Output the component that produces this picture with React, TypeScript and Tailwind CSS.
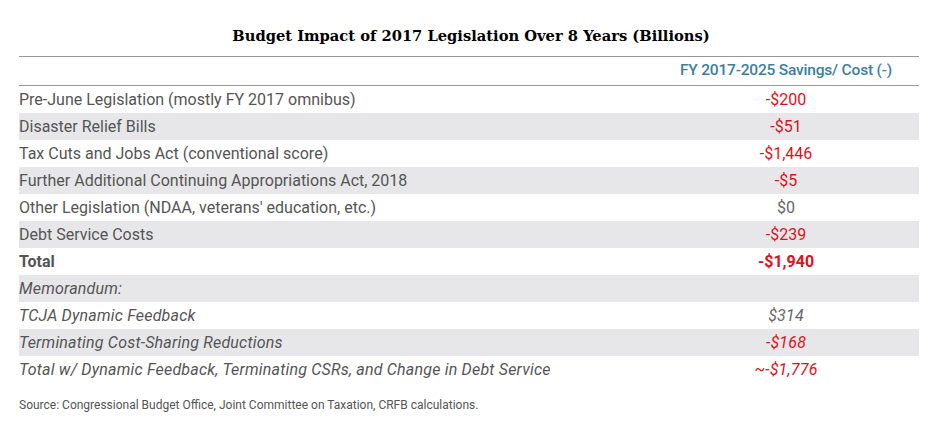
const rows = [
  { label: "Pre-June Legislation (mostly FY 2017 omnibus)", value: "-$200", red: true },
  { label: "Disaster Relief Bills", value: "-$51", red: true },
  { label: "Tax Cuts and Jobs Act (conventional score)", value: "-$1,446", red: true },
  { label: "Further Additional Continuing Appropriations Act, 2018", value: "-$5", red: true },
  { label: "Other Legislation (NDAA, veterans' education, etc.)", value: "$0", red: false },
  { label: "Debt Service Costs", value: "-$239", red: true },
  { label: "Total", value: "-$1,940", red: true, bold: true },
  { label: "Memorandum:", value: "", red: false, italic: true },
  { label: "TCJA Dynamic Feedback", value: "$314", red: false, italic: true },
  { label: "Terminating Cost-Sharing Reductions", value: "-$168", red: true, italic: true },
  { label: "Total w/ Dynamic Feedback, Terminating CSRs, and Change in Debt Service", value: "~-$1,776", red: true, italic: true },
];

export default function App() {
  return (
    <div className="w-[942px] h-[435px] bg-white pt-[26px] px-[19px] font-['Roboto',sans-serif] text-[#555]">
      <h1 className="text-center font-['DejaVu_Serif',serif] font-bold text-[14.7px] leading-[20px] text-black">
        Budget Impact of 2017 Legislation Over 8 Years (Billions)
      </h1>
      <div className="mt-[10px] w-[900px] border-t border-[#999]">
        <div className="flex h-[29px] items-center border-b border-[#999]">
          <div className="flex-1" />
          <div className="w-[266px] text-center text-[15.5px] font-medium text-[#3d7ea3] tracking-[-0.2px]">
            FY 2017-2025 Savings/ Cost (-)
          </div>
        </div>
        {rows.map((r, i) => (
          <div
            key={i}
            className={`flex h-[27px] items-center text-[16px] ${i % 2 === 1 ? "bg-[#e7e7ea]" : "bg-white"} ${r.italic ? "italic tracking-[0.2px]" : ""} ${r.bold ? "font-bold" : ""}`}
          >
            <div className="flex-1">{r.label}</div>
            <div className={`w-[266px] text-center ${r.red ? "text-[#e0101a]" : "text-[#666]"}`}>{r.value}</div>
          </div>
        ))}
      </div>
      <p className="mt-[13px] text-[12px] text-[#555]">
        Source: Congressional Budget Office, Joint Committee on Taxation, CRFB calculations.
      </p>
    </div>
  );
}
